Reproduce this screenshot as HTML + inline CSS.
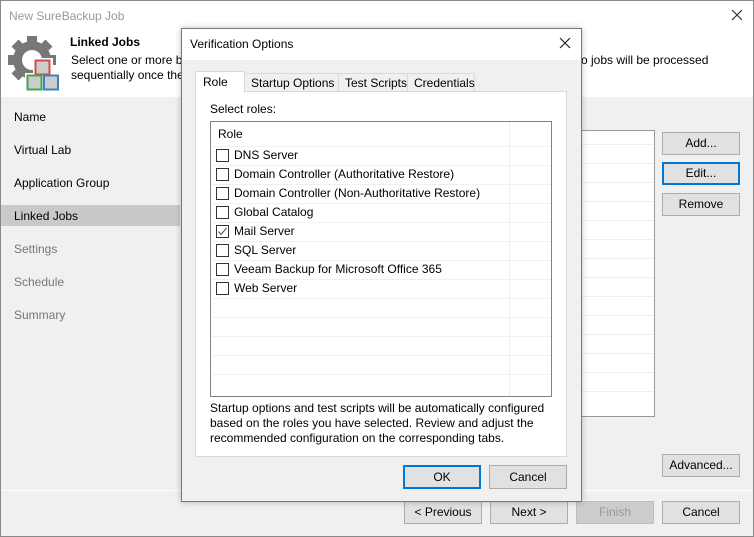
<!DOCTYPE html><html><head><style>
*{box-sizing:border-box;margin:0;padding:0}
body{width:754px;height:537px;position:relative;background:#f0f0f0;font-family:"Liberation Sans",sans-serif;font-size:12px;color:#000;overflow:hidden}
.a{position:absolute;white-space:nowrap}
.btn{position:absolute;background:#e1e1e1;border:1px solid #adadad;text-align:center;line-height:20px;font-size:12px}
.cb{position:absolute;width:13px;height:13px;border:1px solid #333;background:#fff}
.row{position:absolute;left:1px;width:339px;height:1px;background:#f0f0f0}
</style></head><body>
<div class="a" style="left:0;top:0;width:754px;height:537px;border:1px solid #888"></div>
<div class="a" style="left:1px;top:1px;width:752px;height:96px;background:#fff"></div>
<div class="a" style="left:9px;top:9px;color:#999;font-size:12px">New SureBackup Job</div>
<svg class="a" style="left:731px;top:9px" width="12" height="12"><path d="M1 1L11 11M11 1L1 11" stroke="#333" stroke-width="1.2"/></svg>
<svg class="a" style="left:0;top:30px" width="64" height="62" viewBox="0 0 64 62">
<g fill="#777"><circle cx="32" cy="30" r="19"/>
<rect x="27" y="6" width="10" height="48"/><rect x="8" y="25" width="48" height="10"/>
<rect x="27" y="6" width="10" height="48" transform="rotate(45 32 30)"/><rect x="27" y="6" width="10" height="48" transform="rotate(-45 32 30)"/></g>
<circle cx="32" cy="30" r="10" fill="#fff"/>
<rect x="33" y="28" width="20" height="18" fill="#fff"/><rect x="25" y="43" width="36" height="18" fill="#fff"/>
<rect x="35.5" y="30.5" width="14" height="14" fill="#ccc" stroke="#d9484a" stroke-width="2"/>
<rect x="27.5" y="45.5" width="14" height="14" fill="#ccc" stroke="#3ea84a" stroke-width="2"/>
<rect x="44" y="45.5" width="14" height="14" fill="#ccc" stroke="#3f7fc8" stroke-width="2"/></svg>
<div class="a" style="left:70px;top:35px;font-weight:bold">Linked Jobs</div>
<div class="a" style="left:71px;top:53px">Select one or more b</div>
<div class="a" style="left:71px;top:68px">sequentially once the</div>
<div class="a" style="left:581px;top:53px">o jobs will be processed</div>
<div class="a" style="left:14px;top:110px">Name</div>
<div class="a" style="left:14px;top:143px">Virtual Lab</div>
<div class="a" style="left:14px;top:176px">Application Group</div>
<div class="a" style="left:1px;top:205px;width:179px;height:21px;background:#c9c9c9"></div>
<div class="a" style="left:14px;top:209px">Linked Jobs</div>
<div class="a" style="left:14px;top:242px;color:#777">Settings</div>
<div class="a" style="left:14px;top:275px;color:#777">Schedule</div>
<div class="a" style="left:14px;top:308px;color:#777">Summary</div>
<div class="a" style="left:575px;top:130px;width:80px;height:287px;background:#fff;border:1px solid #999"></div>
<div class="a" style="left:581px;top:144px;width:73px;height:1px;background:#eee;box-shadow:0 19px #eee,0 38px #eee,0 57px #eee,0 76px #eee,0 95px #eee,0 114px #eee,0 133px #eee,0 152px #eee,0 171px #eee,0 190px #eee,0 209px #eee,0 228px #eee,0 247px #eee"></div>
<div class="btn" style="left:662px;top:132px;width:78px;height:23px">Add...</div>
<div class="btn" style="left:662px;top:162px;width:78px;height:23px;border:2px solid #0078d7;line-height:19px">Edit...</div>
<div class="btn" style="left:662px;top:193px;width:78px;height:23px">Remove</div>
<div class="btn" style="left:662px;top:454px;width:78px;height:23px">Advanced...</div>
<div class="a" style="left:1px;top:490px;width:752px;height:1px;background:#fff"></div>
<div class="btn" style="left:404px;top:501px;width:78px;height:23px">&lt; Previous</div>
<div class="btn" style="left:490px;top:501px;width:78px;height:23px">Next &gt;</div>
<div class="btn" style="left:576px;top:501px;width:78px;height:23px;background:#ccc;border-color:#bfbfbf;color:#999">Finish</div>
<div class="btn" style="left:662px;top:501px;width:78px;height:23px">Cancel</div>

<div class="a" style="left:181px;top:28px;width:401px;height:474px;background:#f0f0f0;border:1px solid #777;box-shadow:0 0 6px rgba(0,0,0,.25)"></div>
<div class="a" style="left:182px;top:29px;width:399px;height:31px;background:#fff"></div>
<div class="a" style="left:190px;top:37px">Verification Options</div>
<svg class="a" style="left:559px;top:37px" width="12" height="12"><path d="M1 1L11 11M11 1L1 11" stroke="#222" stroke-width="1.2"/></svg>
<div class="a" style="left:195px;top:91px;width:372px;height:366px;background:#fff;border:1px solid #d9d9d9"></div>
<div class="a" style="left:244px;top:73px;width:95px;height:19px;background:#f0f0f0;border:1px solid #d9d9d9;padding-left:6px;line-height:18px">Startup Options</div>
<div class="a" style="left:338px;top:73px;width:70px;height:19px;background:#f0f0f0;border:1px solid #d9d9d9;padding-left:6px;line-height:18px">Test Scripts</div>
<div class="a" style="left:407px;top:73px;width:68px;height:19px;background:#f0f0f0;border:1px solid #d9d9d9;padding-left:6px;line-height:18px">Credentials</div>
<div class="a" style="left:195px;top:71px;width:50px;height:22px;background:#fff;border:1px solid #d9d9d9;border-bottom:none;padding-left:7px;line-height:20px">Role</div>
<div class="a" style="left:210px;top:102px">Select roles:</div>
<div class="a" style="left:210px;top:121px;width:342px;height:276px;background:#fff;border:1px solid #828282">
<div class="a" style="left:298px;top:0;width:1px;height:274px;background:#e6eef8"></div>
<div class="a" style="left:7px;top:5px">Role</div>
<div class="row" style="top:24px"></div><div class="row" style="top:43px"></div><div class="row" style="top:62px"></div><div class="row" style="top:81px"></div><div class="row" style="top:100px"></div><div class="row" style="top:119px"></div><div class="row" style="top:138px"></div><div class="row" style="top:157px"></div><div class="row" style="top:176px"></div><div class="row" style="top:195px"></div><div class="row" style="top:214px"></div><div class="row" style="top:233px"></div><div class="row" style="top:252px"></div>
</div>
<div class="cb" style="left:216px;top:149px"></div><div class="a" style="left:234px;top:148px">DNS Server</div>
<div class="cb" style="left:216px;top:168px"></div><div class="a" style="left:234px;top:167px">Domain Controller (Authoritative Restore)</div>
<div class="cb" style="left:216px;top:187px"></div><div class="a" style="left:234px;top:186px">Domain Controller (Non-Authoritative Restore)</div>
<div class="cb" style="left:216px;top:206px"></div><div class="a" style="left:234px;top:205px">Global Catalog</div>
<div class="cb" style="left:216px;top:225px"><svg width="11" height="11" style="position:absolute;left:0;top:0"><path d="M1.5 5.5 L4 8.5 L9.5 2" stroke="#666" stroke-width="1.3" fill="none"/></svg></div><div class="a" style="left:234px;top:224px">Mail Server</div>
<div class="cb" style="left:216px;top:244px"></div><div class="a" style="left:234px;top:243px">SQL Server</div>
<div class="cb" style="left:216px;top:263px"></div><div class="a" style="left:234px;top:262px">Veeam Backup for Microsoft Office 365</div>
<div class="cb" style="left:216px;top:282px"></div><div class="a" style="left:234px;top:281px">Web Server</div>
<div class="a" style="left:210px;top:401px;line-height:15px">Startup options and test scripts will be automatically configured<br>based on the roles you have selected. Review and adjust the<br>recommended configuration on the corresponding tabs.</div>
<div class="btn" style="left:403px;top:465px;width:78px;height:24px;border:2px solid #0078d7;line-height:20px">OK</div>
<div class="btn" style="left:489px;top:465px;width:78px;height:24px;line-height:22px">Cancel</div>
</body></html>
